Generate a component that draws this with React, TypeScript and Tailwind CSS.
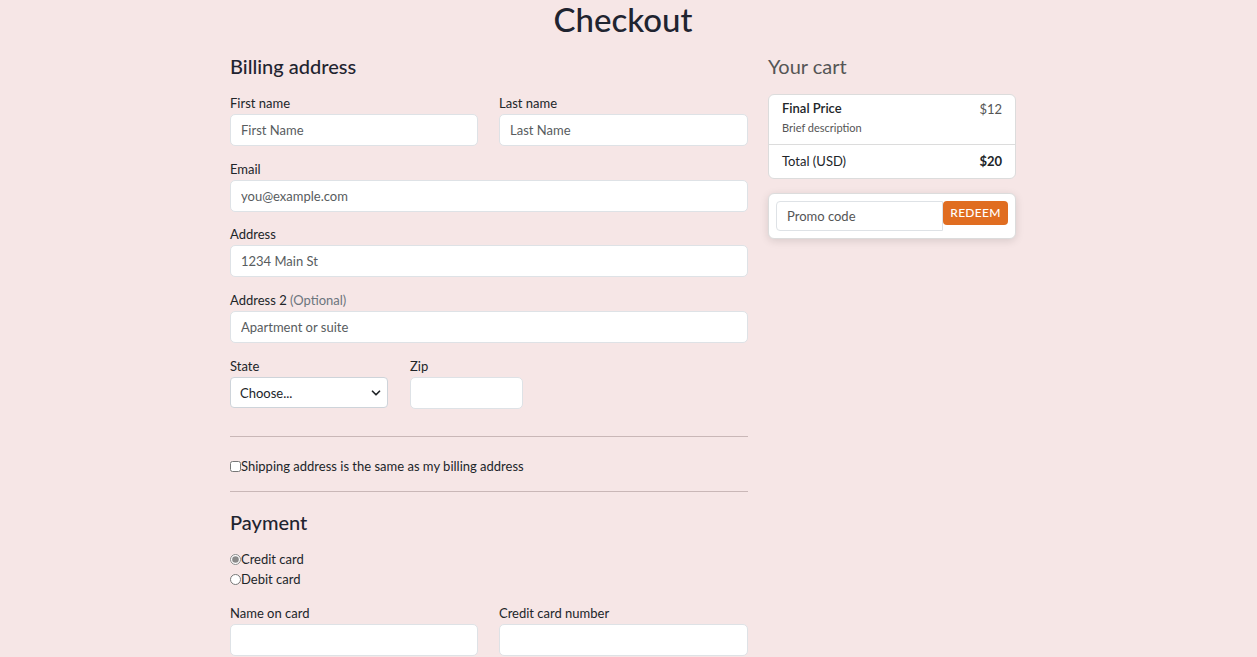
import { ChevronDown } from 'lucide-react'

const font = { fontFamily: '"Lato", "Noto Sans", sans-serif' }

function Field({ label, placeholder, width }: { label: React.ReactNode; placeholder?: string; width?: string }) {
  return (
    <div className={`flex flex-col ${width ?? 'w-full'}`}>
      <label className="text-[13px] leading-[16px] text-[#212529] mb-[3px]">{label}</label>
      <input
        placeholder={placeholder}
        className="h-[32px] w-full rounded-[5px] border border-[#dee2e6] bg-white px-[10px] text-[13px] text-[#212529] placeholder:text-[#585c60] outline-none"
      />
    </div>
  )
}

export default function App() {
  return (
    <div className="min-h-screen bg-[#f6e6e6] text-[#212529]" style={font}>
      <div className="ml-[230px] w-[786px]">
        <h1 className="text-center text-[33px] leading-[38px] text-[#1f2430] font-medium">Checkout</h1>
        <div className="flex gap-[20px]">
          {/* billing */}
          <div className="w-[518px] flex flex-col">
            <h2 className="mt-[14px] text-[20px] leading-[28px] font-medium text-[#1f2430]">Billing address</h2>
            <div className="mt-[15px] flex gap-[21px]">
              <Field label="First name" placeholder="First Name" width="w-[248px]" />
              <Field label="Last name" placeholder="Last Name" width="w-[249px]" />
            </div>
            <div className="mt-[15px]">
              <Field label="Email" placeholder="you@example.com" />
            </div>
            <div className="mt-[14px]">
              <Field label="Address" placeholder="1234 Main St" />
            </div>
            <div className="mt-[15px]">
              <Field label={<>Address 2 <span className="text-[#6c757d]">(Optional)</span></>} placeholder="Apartment or suite" />
            </div>
            <div className="mt-[15px] flex gap-[22px]">
              <div className="flex w-[158px] flex-col">
                <label className="text-[13px] leading-[16px] mb-[3px]">State</label>
                <div className="relative h-[31px] rounded-[4px] border border-[#ced4da] bg-white">
                  <span className="absolute left-[9px] top-[6px] text-[13px] text-[#212529]">Choose...</span>
                  <ChevronDown className="absolute right-[4px] top-[8px] h-[14px] w-[14px]" strokeWidth={3} />
                </div>
              </div>
              <Field label="Zip" width="w-[113px]" />
            </div>
            <hr className="mt-[27px] border-[#c9b7b7]" />
            <label className="mt-[21px] flex items-center text-[13px] leading-[16px]">
              <input type="checkbox" className="m-0 h-[11px] w-[11px]" />
              Shipping address is the same as my billing address
            </label>
            <hr className="mt-[17px] border-[#c9b7b7]" />
            <h2 className="mt-[16px] text-[20px] leading-[28px] font-medium text-[#1f2430]">Payment</h2>
            <div className="mt-[15px] flex flex-col gap-[4px] text-[13px] leading-[16px]">
              <label className="flex items-center">
                <input type="radio" name="pay" defaultChecked className="m-0 h-[11px] w-[11px] accent-[#8a8a8a]" />
                Credit card
              </label>
              <label className="flex items-center">
                <input type="radio" name="pay" className="m-0 h-[11px] w-[11px]" />
                Debit card
              </label>
            </div>
            <div className="mt-[18px] flex gap-[21px]">
              <Field label="Name on card" width="w-[248px]" />
              <Field label="Credit card number" width="w-[249px]" />
            </div>
          </div>
          {/* cart */}
          <div className="w-[248px] flex flex-col">
            <h2 className="mt-[14px] text-[20px] leading-[28px] text-[#555]">Your cart</h2>
            <div className="mt-[14px] rounded-[6px] border border-[#dcdcdc] bg-white">
              <div className="flex justify-between px-[13px] pt-[5px] pb-[9px]">
                <div>
                  <div className="text-[13px] leading-[16px] font-semibold">Final Price</div>
                  <div className="mt-[5px] text-[11px] leading-[14px] text-[#555]">Brief description</div>
                </div>
                <div className="mt-[1px] text-[13px] leading-[16px] text-[#555]">$12</div>
              </div>
              <div className="flex justify-between border-t border-[#dcdcdc] px-[13px] py-[8px] text-[13px] leading-[17px]">
                <span>Total (USD)</span>
                <span className="font-bold">$20</span>
              </div>
            </div>
            <div className="mt-[14px] flex rounded-[6px] border border-[#dcdcdc] bg-white p-[7px] shadow-[0_2px_8px_rgba(0,0,0,0.12)]">
              <input
                placeholder="Promo code"
                className="h-[30px] w-[167px] rounded-l-[4px] border border-[#dee2e6] px-[10px] text-[13px] placeholder:text-[#555] outline-none"
              />
              <button className="h-[24px] w-[67px] rounded-[4px] bg-[#e06d21] text-[12px] font-medium tracking-[0.3px] text-white">REDEEM</button>
            </div>
          </div>
        </div>
      </div>
    </div>
  )
}
